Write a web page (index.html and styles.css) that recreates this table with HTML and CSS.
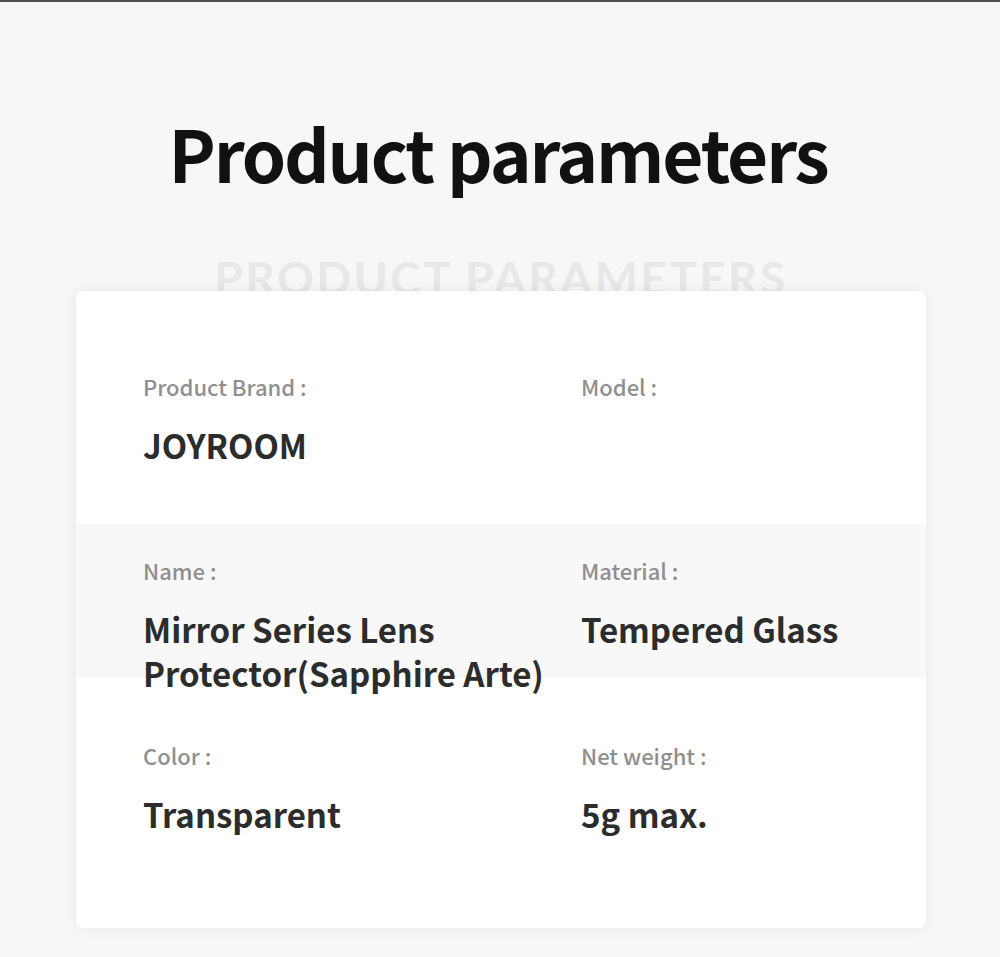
FILE: index.html
```html
<!DOCTYPE html>
<html lang="en">
<head>
<meta charset="utf-8">
<title>Product parameters</title>
<link rel="stylesheet" href="styles.css">
</head>
<body>
<main class="page">
  <header class="head">
    <h1 class="title">Product parameters</h1>
    <div class="watermark">PRODUCT PARAMETERS</div>
  </header>
  <section class="card">
    <div class="item">
      <div class="label">Product Brand :</div>
      <div class="value">JOYROOM</div>
    </div>
    <div class="item">
      <div class="label">Model :</div>
      <div class="value"></div>
    </div>
    <div class="item">
      <div class="label">Name :</div>
      <div class="value">Mirror Series Lens<br>Protector(Sapphire Arte)</div>
    </div>
    <div class="item">
      <div class="label">Material :</div>
      <div class="value">Tempered Glass</div>
    </div>
    <div class="item">
      <div class="label">Color :</div>
      <div class="value">Transparent</div>
    </div>
    <div class="item">
      <div class="label">Net weight :</div>
      <div class="value">5g max.</div>
    </div>
  </section>
</main>
</body>
</html>
```

FILE: styles.css
```css
html, body {
  margin: 0;
  padding: 0;
}
body {
  background: #f7f7f7;
  border-top: 2px solid #4f4f4f;
  font-family: "Noto Sans CJK SC", "Noto Sans", sans-serif;
  width: 1000px;
  height: 955px;
  overflow: hidden;
}
.page {
  display: flex;
  flex-direction: column;
  align-items: center;
  padding-left: 2px;
}
.head {
  position: relative;
  width: 100%;
  height: 289px;
  display: flex;
  justify-content: center;
}
.title {
  margin: 95px 6px 0 0;
  font-size: 71px;
  line-height: 110px;
  font-weight: 700;
  color: #111;
  letter-spacing: -2.1px;
}
.watermark {
  position: absolute;
  left: 0;
  right: 0;
  top: 246px;
  text-align: center;
  font-family: "Lato", sans-serif;
  font-weight: 700;
  font-size: 46px;
  line-height: 60px;
  letter-spacing: 2.4px;
  color: #e8e8e8;
}
.card {
  position: relative;
  z-index: 1;
  width: 850px;
  box-sizing: border-box;
  padding: 81px 0 0 67px;
  height: 637px;
  border-radius: 8px;
  box-shadow: 0 0 14px rgba(0, 0, 0, 0.07);
  background: linear-gradient(to bottom, #fff 0, #fff 233px, #f8f8f8 233px, #f8f8f8 386px, #fff 386px);
  display: grid;
  grid-template-columns: 438px 1fr;
  grid-template-rows: 184px 185px 185px;
}
.label {
  font-size: 22px;
  line-height: 28px;
  color: #8f8f8f;
  font-weight: 500;
}
.value {
  margin-top: 23px;
  font-size: 33px;
  line-height: 44px;
  font-weight: 700;
  color: #2c2c2c;
}
```
